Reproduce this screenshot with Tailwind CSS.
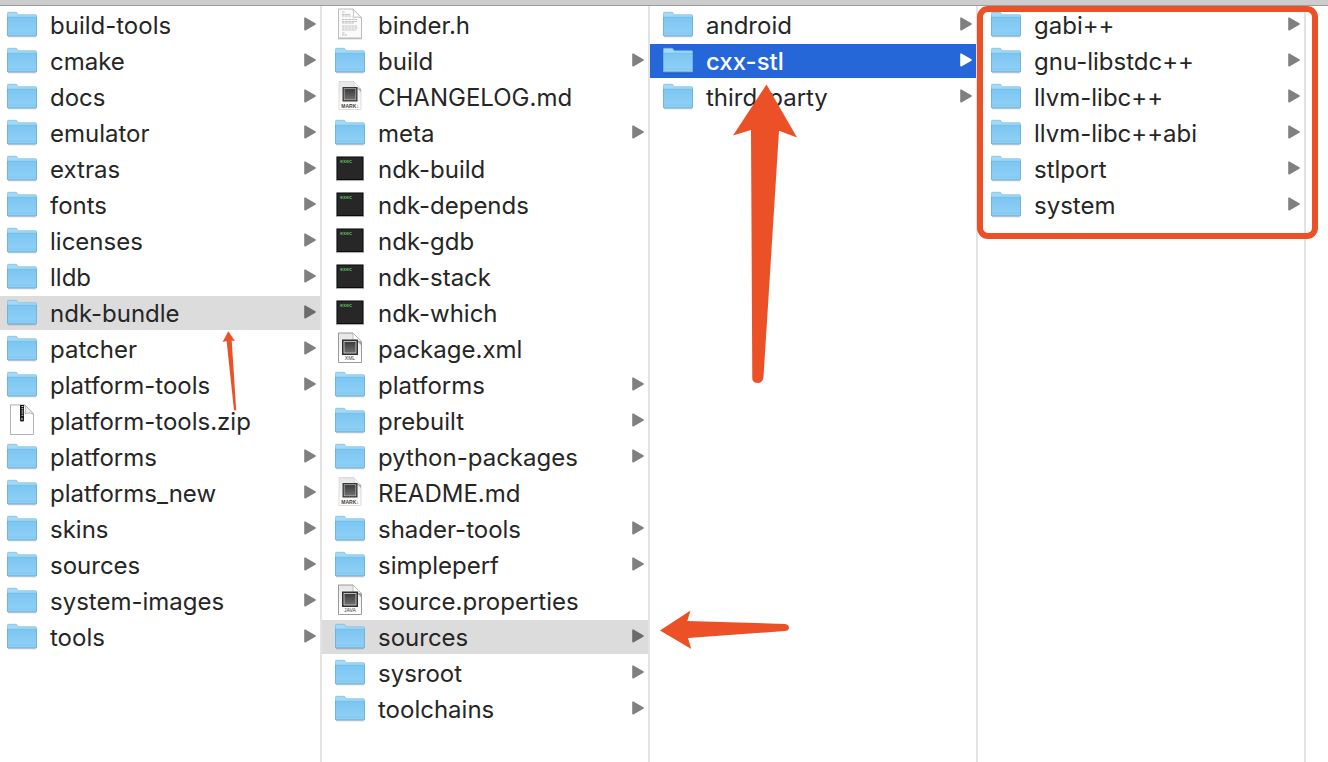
<!DOCTYPE html>
<html lang="en">
<head>
<meta charset="utf-8">
<meta name="viewport" content="width=device-width, initial-scale=1">
<title>ndk-bundle</title>
<script src="https://cdn.jsdelivr.net/npm/@tailwindcss/browser@4"></script>
</head>
<body class="flex min-h-screen flex-col overflow-x-hidden bg-white font-['Inter','Liberation_Sans',sans-serif] text-[24px] text-[#262626]">
<svg class="absolute size-0" aria-hidden="true">
  <defs>
    <linearGradient id="blue" x1="0" y1="0" x2="0" y2="1"><stop offset="0" stop-color="#7cc5f1"/><stop offset="1" stop-color="#90d2f8"/></linearGradient>
    <linearGradient id="chip" x1="0" y1="0" x2="0" y2="1"><stop offset="0" stop-color="#3a3a3a"/><stop offset="1" stop-color="#707070"/></linearGradient>
    <linearGradient id="paper" x1="0" y1="0" x2="0" y2="1"><stop offset="0" stop-color="#e6e6e6"/><stop offset="1" stop-color="#ffffff"/></linearGradient>
  </defs>
  <symbol id="folder" viewBox="0 0 30 34">
    <path d="M1 28.7h28" stroke="#000" stroke-opacity=".16" stroke-width="1.4"/>
    <path d="M.4 27V5.4Q.4 4.3 1.5 4.3H8.6Q9.4 4.3 10 5L11.2 6.8H28.6Q29.6 6.8 29.6 7.8V27Q29.6 27.8 28.8 27.8H1.2Q.4 27.8 .4 27Z" fill="#a2daf8" stroke="#78b7dc" stroke-width=".7"/>
    <path d="M.4 9.2H29.6V27Q29.6 27.8 28.8 27.8H1.2Q.4 27.8 .4 27Z" fill="url(#blue)"/>
    <path d="M.4 9.2H29.6" stroke="#6db4dd" stroke-width=".7"/>
    <path d="M.5 25.2H29.5" stroke="#7ec0e6" stroke-width=".6"/>
    <path d="M.4 9V27.3Q.5 27.8 1.2 27.8H28.8Q29.6 27.8 29.6 27V9" fill="none" stroke="#69a9d0" stroke-width=".8"/>
  </symbol>
  <symbol id="header" viewBox="0 0 30 34">
    <path d="M3.5 1H18L26.5 10V30H3.5Z" fill="#fafafa" stroke="#b5b5b5" stroke-width=".9"/>
    <path d="M3 30.8H27" stroke="#999" stroke-width=".7"/>
    <path d="M18 1Q19.5 6 18 9.5Q22 8 26.5 10Z" fill="#fff" stroke="#b8b8b8" stroke-width=".8"/>
    <path d="M7 4h3M7 6.5h8M7 8h9M7 11.5h15M7 13.5h15M7 15h12M7 18h15M7 20h16M7 22h14M7 25h3M7 27h5" stroke="#b9b9b9" stroke-width=".9" stroke-dasharray="2.6 .5"/>
  </symbol>
  <symbol id="code" viewBox="0 0 30 34">
    <path d="M3.5 1H18L26.5 9.5V30.5H3.5Z" fill="url(#paper)" stroke="#8f8f8f" stroke-width=".9"/>
    <path d="M18 1V8.5L26.5 9.5Z" fill="#fff" stroke="#aaa" stroke-width=".7"/>
    <path d="M18 6.5L26 10V13L22 9Z" fill="#777" opacity=".65"/>
    <rect x="7" y="7.5" width="16" height="15.5" fill="#303030"/>
    <rect x="9" y="9.5" width="12" height="11.5" fill="url(#chip)" stroke="#c8c8c8" stroke-width=".9"/>
  </symbol>
  <symbol id="mark" viewBox="0 0 30 34">
    <path d="M4 1.5H18.5L26 9V29.5H4Z" fill="url(#paper)" stroke="#d4d4d4" stroke-width=".8"/>
    <path d="M18.5 1.5Q20 5 19 8Q22 7 26 9Z" fill="#fff" stroke="#ccc" stroke-width=".6"/>
    <path d="M18 5L26 9.5V12L22 8Z" fill="#777" opacity=".55"/>
    <rect x="7.5" y="7" width="15" height="14.5" fill="#383838"/>
    <rect x="9.2" y="8.7" width="11.6" height="11.1" fill="url(#chip)" stroke="#bbb" stroke-width=".7"/>
  </symbol>
  <symbol id="exec" viewBox="0 0 30 34">
    <path d="M1 28.5H29" stroke="#000" stroke-opacity=".3" stroke-width="1.2"/>
    <rect x="1" y="4.5" width="28" height="23.5" fill="#cfe0e8"/>
    <rect x="2" y="5" width="26" height="22.5" fill="#272727" stroke="#0b0b0b"/>
  </symbol>
  <symbol id="zip" viewBox="0 0 30 34">
    <path d="M3.5 .9H18L26.5 10V30.5H3.5Z" fill="#fdfdfd" stroke="#a9a9a9" stroke-width=".9"/>
    <path d="M18 1Q19.5 6 18 9.5Q22 8 26.5 10Z" fill="#f2f2f2" stroke="#aaa" stroke-width=".8"/>
    <path d="M15 1V14" stroke="#111" stroke-width="4"/>
    <path d="M15.4 2V13" stroke="#e5e5e5" stroke-width="1.8" stroke-dasharray="1 1.2"/>
    <rect x="13" y="12.5" width="4" height="5" rx="1" fill="#222"/><path d="M15 14v2" stroke="#ddd"/>
  </symbol>
  <symbol id="disclosure" viewBox="0 0 12 14">
    <path d="M1 1.2V12.8L11 7Z" fill="currentColor" stroke="currentColor" stroke-width="1.6" stroke-linejoin="round"/>
  </symbol>
</svg>

<header class="h-[6px] shrink-0 border-b border-[#9d9d9d] bg-[#cdcdcd]"></header>
<main id="browser" class="grid flex-1 grid-cols-[322fr_328fr_328fr_328fr_22fr]"></main>

<template id="arrow-bundle">
  <svg class="pointer-events-none absolute top-full left-[222px] z-10 h-[82px] w-[16px]" viewBox="222 330 16 82" aria-hidden="true"><path d="M228.3 331.3L222.6 342L226.6 341L234 410.3H236.2L231.7 340.5L235 341Z" fill="#eb5026"/></svg>
</template>
<template id="arrow-stl">
  <svg class="pointer-events-none absolute top-full left-[82px] z-10 h-[306px] w-[66px]" viewBox="732 78 66 306" aria-hidden="true"><path d="M766.5 84.5L733 135.5L751 130L752.3 379Q753 383 758 383Q762.5 383 763.5 377L779 130.7L797 137.5Z" fill="#eb5026"/></svg>
</template>
<template id="arrow-sources">
  <svg class="pointer-events-none absolute top-[-10px] left-full z-10 ml-[10px] h-[40px] w-[132px]" viewBox="658 610 132 40" aria-hidden="true"><path d="M660 630.5L690.5 610.5L687.3 621L785 624Q789 624.5 789 628Q788.5 631 785 631L688 638L691.3 649Z" fill="#eb5026"/></svg>
</template>

<script>
  const columns = [
    { name: 'sdk', pad: 'pl-[7px]', selected: 'ndk-bundle', tone: 'bg-[#dcdcdc]', arrow: 'arrow-bundle',
      items: ['build-tools', 'cmake', 'docs', 'emulator', 'extras', 'fonts', 'licenses', 'lldb', 'ndk-bundle', 'patcher', 'platform-tools', 'platform-tools.zip|zip', 'platforms', 'platforms_new', 'skins', 'sources', 'system-images', 'tools'] },
    { name: 'ndk-bundle', pad: 'pl-[13px]', selected: 'sources', tone: 'bg-[#dcdcdc]', arrow: 'arrow-sources',
      items: ['binder.h|header', 'build', 'CHANGELOG.md|mark', 'meta', 'ndk-build|exec', 'ndk-depends|exec', 'ndk-gdb|exec', 'ndk-stack|exec', 'ndk-which|exec', 'package.xml|code|XML', 'platforms', 'prebuilt', 'python-packages', 'README.md|mark', 'shader-tools', 'simpleperf', 'source.properties|code|JAVA', 'sources', 'sysroot', 'toolchains'] },
    { name: 'sources', pad: 'pl-[13px]', selected: 'cxx-stl', tone: 'bg-[#2566d9] font-medium text-white', arrow: 'arrow-stl',
      items: ['android', 'cxx-stl', 'third-party'] },
    { name: 'cxx-stl', pad: 'pl-[13px]', framed: true,
      items: ['gabi++', 'gnu-libstdc++', 'llvm-libc++', 'llvm-libc++abi', 'stlport', 'system'] }
  ];
  const labels = { mark: 'MARK↓', exec: 'exec' };

  function row(col, item) {
    const [name, kind = 'folder', tag = labels[kind] || ''] = item.split('|');
    const on = name === col.selected;
    const caption = !tag ? '' : kind === 'exec'
      ? `<text x="5" y="11" font-size="5" font-weight="700" font-family="Liberation Mono" fill="#62bd62">${tag}</text>`
      : `<text x="15" y="28" font-size="5" text-anchor="middle" font-weight="${kind === 'mark' ? 700 : 400}" font-family="Liberation Sans" fill="#444">${tag}</text>`;
    const arrowTone = !on ? 'text-[#808080]' : col.name === 'sources' ? 'text-white' : 'text-[#6c6c6c]';
    const disclosure = kind === 'folder'
      ? `<svg class="mb-[2px] h-[14px] w-[12px] shrink-0 ${arrowTone}" aria-hidden="true"><use href="#disclosure"/></svg>` : '';
    return `<li class="relative">
      <button type="button" class="flex h-[34px] w-full items-center gap-[13px] pr-1 text-left ${col.pad} ${on ? col.tone : ''}">
        <svg class="h-[34px] w-[30px] shrink-0" viewBox="0 0 30 34" aria-hidden="true"><use href="#${kind}"/>${caption}</svg>
        <span class="min-w-0 flex-1 whitespace-nowrap pt-px">${name}</span>${disclosure}
      </button>${on ? document.getElementById(col.arrow).innerHTML : ''}
    </li>`;
  }

  document.getElementById('browser').innerHTML = columns.map(col => `
    <section aria-label="${col.name}" class="relative border-r-2 border-[#e3e3e3] pt-[2px]">
      <ul class="flex flex-col gap-[2px]">${col.items.map(item => row(col, item)).join('')}</ul>
      ${col.framed ? '<div class="pointer-events-none absolute top-0 -right-[14px] -left-px h-[233px] rounded-[11px] border-[6px] border-[#eb5026]"></div>' : ''}
    </section>`).join('');
</script>
</body>
</html>
